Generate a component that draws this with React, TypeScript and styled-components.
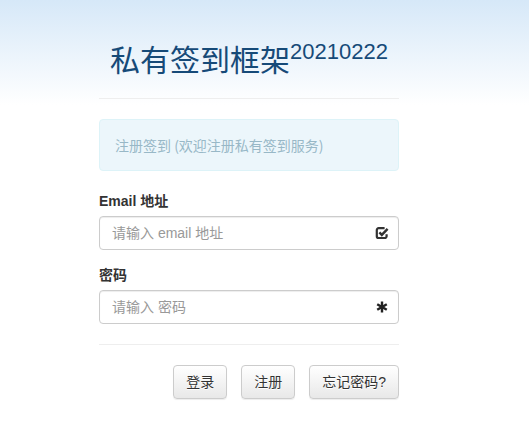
import React from "react";
import styled, { createGlobalStyle } from "styled-components";

const Global = createGlobalStyle`
  html, body { margin: 0; padding: 0; }
  body {
    font-family: "Liberation Sans", "Noto Sans CJK SC", Arial, sans-serif;
    font-size: 14px;
    line-height: 20px;
    color: #333;
    background: #fff;
  }
  * { box-sizing: border-box; }
`;

const Page = styled.div`
  min-height: 433px;
  background: linear-gradient(to bottom, #d6e8f8 0px, #ffffff 105px);
  padding: 36px 0 0 99px;
`;

const Container = styled.div`
  width: 300px;
  display: flex;
  flex-direction: column;
`;

const Title = styled.h1`
  margin: 0;
  text-align: center;
  font-size: 30px;
  line-height: 50px;
  font-weight: normal;
  color: #164a78;
  height: 52px;
`;

const Sup = styled.sup`
  font-size: 22px;
  line-height: 0;
  position: relative;
  top: -12px;
  vertical-align: baseline;
  font-family: "Liberation Sans", Arial, sans-serif;
`;

const Rule = styled.hr<{ $top: number }>`
  border: 0;
  border-top: 1px solid #eee;
  margin: ${(p) => p.$top}px 0 20px;
  width: 100%;
`;

const Alert = styled.div`
  padding: 15px 15px;
  border: 1px solid #ddf3f8;
  border-radius: 4px;
  background: #ecf6fb;
  color: #98b8c7;
  margin-bottom: 20px;
  font-family: "Noto Sans CJK SC", sans-serif;
  font-size: 14px;
  line-height: 20px;
`;

const Group = styled.div<{ $last?: boolean }>`
  display: flex;
  flex-direction: column;
  margin-bottom: ${(p) => (p.$last ? 0 : 15)}px;
`;

const Label = styled.label`
  font-weight: bold;
  margin-bottom: 5px;
  line-height: 20px;
  font-family: "Liberation Sans", "Noto Sans CJK SC", sans-serif;
`;

const Field = styled.div`
  position: relative;
  height: 34px;
`;

const Input = styled.input`
  width: 100%;
  height: 34px;
  padding: 6px 42px 6px 12px;
  border: 1px solid #ccc;
  border-radius: 4px;
  box-shadow: inset 0 1px 1px rgba(0, 0, 0, 0.075);
  font-family: "Liberation Sans", "Noto Sans CJK SC", sans-serif;
  font-size: 14px;
  color: #555;
  outline: none;
  &::placeholder { color: #999; }
`;

const Feedback = styled.span`
  position: absolute;
  right: 0;
  top: 0;
  width: 34px;
  height: 34px;
  display: flex;
  align-items: center;
  justify-content: center;
  color: #333;
`;

const Actions = styled.div`
  display: flex;
  justify-content: flex-end;
  gap: 14px;
`;

const Button = styled.button`
  height: 34px;
  padding: 6px 12px;
  border: 1px solid #ccc;
  border-radius: 4px;
  background: linear-gradient(to bottom, #ffffff 0, #e8e8e8 100%);
  box-shadow: inset 0 1px 0 rgba(255, 255, 255, 0.15), 0 1px 1px rgba(0, 0, 0, 0.075);
  text-shadow: 0 1px 0 #fff;
  color: #333;
  font-family: "Liberation Sans", "Noto Sans CJK SC", sans-serif;
  font-size: 14px;
  line-height: 20px;
  cursor: pointer;
`;

const CheckIcon = () => (
  <svg width="14" height="14" viewBox="0 0 14 14">
    <path d="M9.6 2.2H3.6a1.8 1.8 0 0 0-1.8 1.8v6.2a1.8 1.8 0 0 0 1.8 1.8h6.2a1.8 1.8 0 0 0 1.8-1.8V8.2" fill="none" stroke="#333" strokeWidth="2.2" />
    <path d="M4.4 6.4l2.4 2.5 5.8-6.1" fill="none" stroke="#333" strokeWidth="2.4" />
  </svg>
);

const AsteriskIcon = () => (
  <svg width="14" height="14" viewBox="0 0 14 14">
    <g stroke="#222" strokeWidth="2.4" strokeLinecap="butt">
      <line x1="7" y1="1.5" x2="7" y2="12.5" />
      <line x1="2.2" y1="4.2" x2="11.8" y2="9.8" />
      <line x1="2.2" y1="9.8" x2="11.8" y2="4.2" />
    </g>
  </svg>
);

export default function App() {
  return (
    <>
      <Global />
      <Page>
        <Container>
          <Title>
            私有签到框架<Sup>20210222</Sup>
          </Title>
          <Rule $top={10} />
          <Alert>注册签到 (欢迎注册私有签到服务)</Alert>
          <Group>
            <Label>Email 地址</Label>
            <Field>
              <Input type="text" placeholder="请输入 email 地址" />
              <Feedback><CheckIcon /></Feedback>
            </Field>
          </Group>
          <Group $last>
            <Label>密码</Label>
            <Field>
              <Input type="password" placeholder="请输入 密码" />
              <Feedback><AsteriskIcon /></Feedback>
            </Field>
          </Group>
          <Rule $top={20} />
          <Actions>
            <Button>登录</Button>
            <Button>注册</Button>
            <Button>忘记密码?</Button>
          </Actions>
        </Container>
      </Page>
    </>
  );
}
